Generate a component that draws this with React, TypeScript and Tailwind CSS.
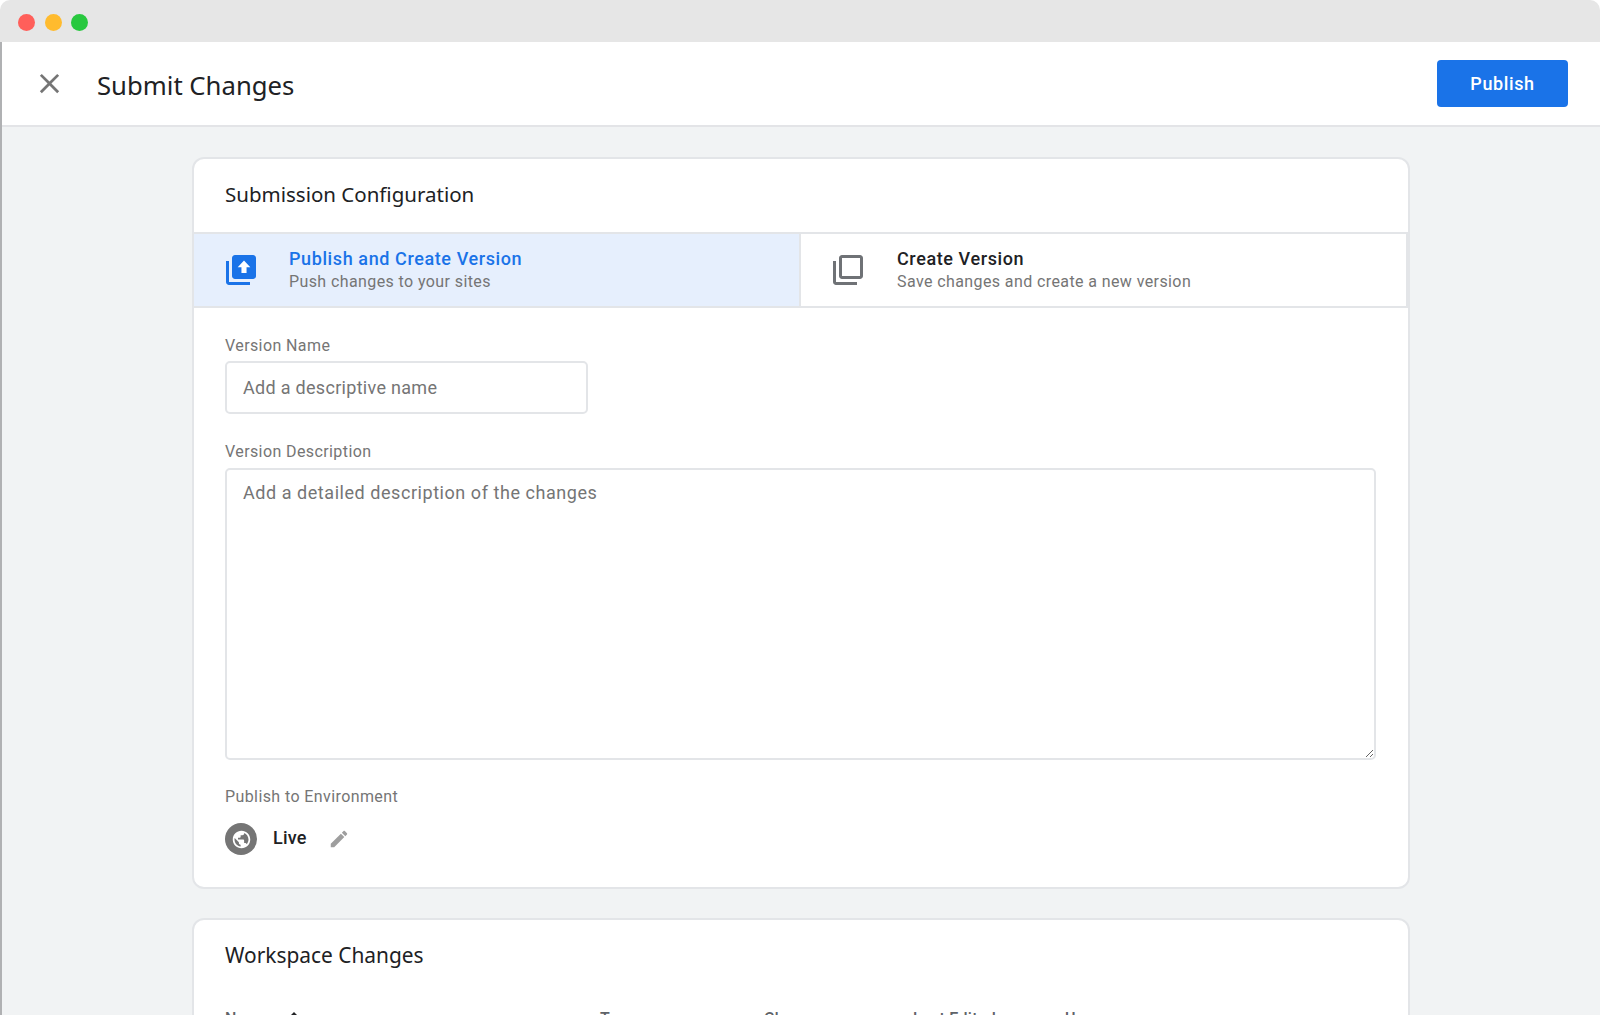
const body = "font-['Roboto',sans-serif]";
const heading = "font-['Noto_Sans',sans-serif]";

function PublishIcon() {
  return (
    <svg viewBox="0 0 24 24" className="h-9 w-9 shrink-0">
      <path fill="#1a73e8" d="M4 6H2v14c0 1.1.9 2 2 2h14v-2H4V6z" />
      <path
        fill="#1a73e8"
        d="M20 2H8c-1.1 0-2 .9-2 2v12c0 1.1.9 2 2 2h12c1.1 0 2-.9 2-2V4c0-1.1-.9-2-2-2z"
      />
      <path fill="#fff" d="M14 5.6 9.8 10.2h2.5V14h3.4v-3.8h2.5z" />
    </svg>
  );
}

function VersionIcon() {
  return (
    <svg viewBox="0 0 24 24" className="h-9 w-9 shrink-0" fill="#6f7276">
      <path d="M4 6H2v14c0 1.1.9 2 2 2h14v-2H4V6zm16-4H8c-1.1 0-2 .9-2 2v12c0 1.1.9 2 2 2h12c1.1 0 2-.9 2-2V4c0-1.1-.9-2-2-2zm0 14H8V4h12v12z" />
    </svg>
  );
}

function Tab({
  active,
  title,
  detail,
  icon,
}: {
  active?: boolean;
  title: string;
  detail: string;
  icon: React.ReactNode;
}) {
  return (
    <div
      className={`flex h-[72px] items-center ${
        active
          ? "gap-[30px] bg-[#e6effd] pl-[29px]"
          : "gap-[31px] border-r-2 border-l-2 border-[#e3e5e8] bg-white pl-[29px]"
      }`}
    >
      {icon}
      <div className="pb-[1px]">
        <div
          className={`text-[18px] leading-[23px] font-medium tracking-[0.6px] ${
            active ? "text-[#1a73e8]" : "text-[#202124]"
          }`}
        >
          {title}
        </div>
        <div className="text-[16px] leading-[23px] tracking-[0.4px] text-[#757575]">{detail}</div>
      </div>
    </div>
  );
}

function FieldLabel({ children }: { children: string }) {
  return <div className="text-[16px] leading-5 tracking-[0.4px] text-[#757575]">{children}</div>;
}

export default function App() {
  return (
    <div className={`${body} h-[1015px] overflow-hidden bg-white`}>
      <div className="flex h-[42px] items-center gap-[9.67px] rounded-t-[10px] bg-[#e6e6e6] pt-[2px] pl-[18px]">
        <span className="h-[17px] w-[17px] rounded-full bg-[#ff5f5a]" />
        <span className="h-[17px] w-[17px] rounded-full bg-[#ffbb2e]" />
        <span className="h-[17px] w-[17px] rounded-full bg-[#28c83f]" />
      </div>

      <div className="h-[973px] border-l-2 border-[#b0b1b3] bg-[#f1f3f4]">
        <header className="flex h-[85px] items-center border-b-2 border-[#e3e4e7] bg-white pr-[32px]">
          <svg viewBox="0 0 24 24" className="ml-[31px] h-[33px] w-[33px] shrink-0" fill="#757575">
            <path d="M19 6.41 17.59 5 12 10.59 6.41 5 5 6.41 10.59 12 5 17.59 6.41 19 12 13.41 17.59 19 19 17.59 13.41 12z" />
          </svg>
          <h1 className={`${heading} ml-[31px] pt-[5px] text-[25.7px] text-[#202124]`}>Submit Changes</h1>
          <button className="mb-[1px] ml-auto h-[47px] w-[131px] rounded-[4px] bg-[#1a73e8] text-[18px] font-medium tracking-[0.6px] text-white">
            Publish
          </button>
        </header>

        <main className="flex flex-col gap-[29px] pt-[30px] pl-[190px]">
          <section className="h-[732px] w-[1218px] overflow-hidden rounded-[12px] border-2 border-[#e3e5e8] bg-white">
            <h2 className={`${heading} flex h-[73px] items-center pb-[3px] pl-[31px] text-[20.5px] text-[#202124]`}>
              Submission Configuration
            </h2>
            <div className="grid grid-cols-[605px_1fr] border-y-2 border-[#e3e5e8]">
              <Tab
                active
                title="Publish and Create Version"
                detail="Push changes to your sites"
                icon={<PublishIcon />}
              />
              <Tab
                title="Create Version"
                detail="Save changes and create a new version"
                icon={<VersionIcon />}
              />
            </div>

            <div className="px-[31px] pt-[28px]">
              <FieldLabel>Version Name</FieldLabel>
              <input
                placeholder="Add a descriptive name"
                className="mt-[5px] block h-[53px] w-[363px] rounded-[5px] border-2 border-[#e3e5e8] px-[16px] text-[18px] tracking-[0.3px] outline-none placeholder:text-[#757575]"
              />
              <div className="mt-[28px]">
                <FieldLabel>Version Description</FieldLabel>
              </div>
              <textarea
                placeholder="Add a detailed description of the changes"
                className="mt-[6px] block h-[292px] w-[1151px] rounded-[5px] border-2 border-[#e3e5e8] px-[16px] py-[9px] text-[18px] tracking-[0.55px] outline-none placeholder:text-[#757575]"
              />
              <div className="mt-[27px]">
                <FieldLabel>Publish to Environment</FieldLabel>
              </div>
              <div className="mt-[16px] flex items-center">
                <span className="flex h-[32px] w-[32px] items-center justify-center rounded-full bg-[#757575]">
                  <svg viewBox="0 0 24 24" className="h-[21px] w-[21px]" fill="#fff">
                    <path d="M12 2C6.48 2 2 6.48 2 12s4.48 10 10 10 10-4.48 10-10S17.52 2 12 2zm-1 17.93c-3.95-.49-7-3.85-7-7.93 0-.62.08-1.21.21-1.79L9 15v1c0 1.1.9 2 2 2v1.93zm6.9-2.54c-.26-.81-1-1.39-1.9-1.39h-1v-3c0-.55-.45-1-1-1H8v-2h2c.55 0 1-.45 1-1V7h2c1.1 0 2-.9 2-2v-.41c2.93 1.19 5 4.06 5 7.41 0 2.08-.8 3.97-2.1 5.39z" />
                  </svg>
                </span>
                <span className="ml-[16px] pb-[3px] text-[18px] font-medium tracking-[0.2px] text-[#202124]">Live</span>
                <svg viewBox="0 0 24 24" className="ml-[21px] h-[22px] w-[22px]" fill="#9e9e9e">
                  <path d="M3 17.25V21h3.75L17.81 9.94l-3.75-3.75L3 17.25zM20.71 7.04c.39-.39.39-1.02 0-1.41l-2.34-2.34c-.39-.39-1.02-.39-1.41 0l-1.83 1.83 3.75 3.75 1.83-1.83z" />
                </svg>
              </div>
            </div>
          </section>

          <section className="h-[300px] w-[1218px] rounded-[12px] border-2 border-[#e3e5e8] bg-white">
            <h2 className={`${heading} flex h-[71px] items-center pl-[31px] text-[20.9px] text-[#202124]`}>
              Workspace Changes
            </h2>
            <div className="grid grid-cols-[375px_164px_149px_152px_1fr] pt-[16px] pl-[31px] text-[16px] font-medium tracking-[0.3px] text-[#5f6368]">
              <div className="flex items-center gap-[16px]">
                Name
                <svg viewBox="0 0 24 24" className="-mt-[3px] h-[18px] w-[18px]" fill="#202124">
                  <path d="M4 12l1.41 1.41L11 7.83V20h2V7.83l5.58 5.59L20 12l-8-8-8 8z" />
                </svg>
              </div>
              <div>Type</div>
              <div>Change</div>
              <div>Last Edited</div>
              <div>User</div>
            </div>
          </section>
        </main>
      </div>
    </div>
  );
}
